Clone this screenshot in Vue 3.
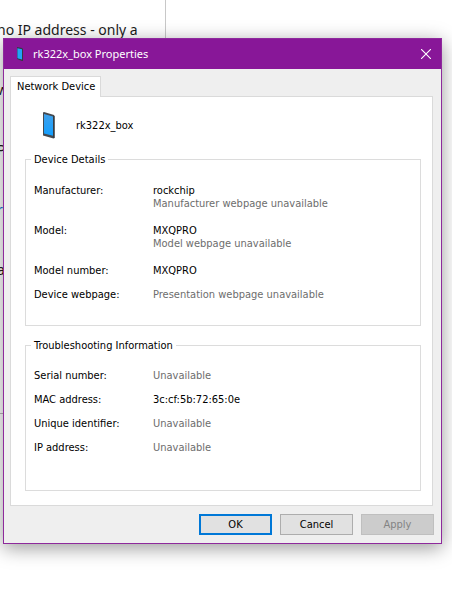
<script setup>
const groups = [
  {
    title: 'Device Details',
    kind: 'details',
    rows: [
      { label: 'Manufacturer:', value: 'rockchip', note: 'Manufacturer webpage unavailable' },
      { label: 'Model:', value: 'MXQPRO', note: 'Model webpage unavailable' },
      { label: 'Model number:', value: 'MXQPRO' },
      { label: 'Device webpage:', note: 'Presentation webpage unavailable' },
    ],
  },
  {
    title: 'Troubleshooting Information',
    kind: 'trouble',
    rows: [
      { label: 'Serial number:', note: 'Unavailable' },
      { label: 'MAC address:', value: '3c:cf:5b:72:65:0e' },
      { label: 'Unique identifier:', note: 'Unavailable' },
      { label: 'IP address:', note: 'Unavailable' },
    ],
  },
]
</script>

<template>
  <div class="desktop">
    <div class="page" aria-hidden="true">
      <p class="line">no IP address - only a</p>
      <p class="line">w</p>
      <p class="line">P</p>
      <p class="line link">r</p>
      <p class="line">a</p>
    </div>

    <section class="dialog" role="dialog" aria-labelledby="dialog-title">
      <header class="titlebar">
        <svg class="icon-small" viewBox="0 0 6 14" aria-hidden="true">
          <path d="M0 0 5 1 6 2V14L5 14 0 12Z" fill="#333b44" />
          <path d="M0.4 1.2 5 2.2V12.4L0.4 11.2Z" fill="#22a3f8" />
        </svg>
        <h1 id="dialog-title">rk322x_box Properties</h1>
        <button class="close" type="button" aria-label="Close">
          <svg viewBox="0 0 10 10" aria-hidden="true">
            <path d="M0 0 10 10M10 0 0 10" stroke="#fff" stroke-width="1.1" />
          </svg>
        </button>
      </header>

      <div class="body">
        <div class="tabs" role="tablist">
          <button id="tab-network" class="tab" type="button" role="tab" aria-selected="true" aria-controls="panel-network">Network Device</button>
        </div>
        <div id="panel-network" class="panel" role="tabpanel" aria-labelledby="tab-network">
          <div class="device">
            <svg class="icon" viewBox="0 0 12 27" aria-hidden="true">
              <defs>
                <linearGradient id="screen" x1="0" y1="0" x2="0" y2="1">
                  <stop offset="0" stop-color="#3fa0ea" />
                  <stop offset="1" stop-color="#129fff" />
                </linearGradient>
              </defs>
              <path d="M0 0.5 1 0 11 3 11.5 4V26L10.5 26.5 0 23.5Z" fill="#454a50" />
              <path d="M10.5 4 11.5 4V26L10.5 26Z" fill="#2c3035" />
              <path d="M1 2 10 4.6V23.8L1 21.4Z" fill="url(#screen)" />
            </svg>
            <span>rk322x_box</span>
          </div>

          <fieldset v-for="g in groups" :key="g.title" class="group" :class="g.kind">
            <legend>{{ g.title }}</legend>
            <dl>
              <div v-for="r in g.rows" :key="r.label" class="row">
                <dt>{{ r.label }}</dt>
                <dd>
                  <span v-if="r.value">{{ r.value }}</span>
                  <span v-if="r.note" class="note">{{ r.note }}</span>
                </dd>
              </div>
            </dl>
          </fieldset>
        </div>

        <footer class="actions">
          <button class="btn primary" type="button">OK</button>
          <button class="btn" type="button">Cancel</button>
          <button class="btn" type="button" disabled>Apply</button>
        </footer>
      </div>
    </section>
  </div>
</template>

<style>
body {
  margin: 0;
  background: #fff;
}
</style>

<style scoped>
.desktop {
  position: relative;
  min-height: 100vh;
  padding: 38px 10px 45px 3px;
  box-sizing: border-box;
  overflow: hidden;
  font-family: 'DejaVu Sans Condensed', 'DejaVu Sans', sans-serif;
  font-size: 11px;
  line-height: 13px;
  color: #000;
}
.page {
  position: absolute;
  top: 0;
  left: 0;
  width: 166px;
  height: 414px;
  padding-top: 20px;
  box-sizing: border-box;
  border-right: 1px solid #c8c8c8;
  border-bottom: 1px solid #b8b8b8;
  font-family: 'Noto Sans', 'Open Sans', sans-serif;
  font-size: 14px;
  line-height: 20px;
  color: #1c1c1c;
}
.line {
  margin: 0 0 40px -3px;
  white-space: nowrap;
}
.link {
  color: #0b78d5;
}
.dialog {
  position: relative;
  border: 1px solid #8e2a9c;
  background: #efefef;
  box-shadow: 0 4px 18px rgba(0, 0, 0, 0.4);
}
.titlebar {
  display: flex;
  align-items: center;
  height: 30px;
  padding: 0 10px 0 13px;
  background: #881798;
  color: #fff;
}
.icon-small {
  width: 6px;
  height: 14px;
  margin-right: 10px;
}
h1 {
  flex: 1;
  margin: 0;
  font-family: 'Noto Sans', 'Open Sans', sans-serif;
  font-size: 11px;
  line-height: 16px;
  font-weight: 400;
}
.close {
  display: flex;
  padding: 0;
  border: 0;
  background: none;
}
.close svg {
  width: 10px;
  height: 10px;
}
.body {
  padding: 7px 7px 8px 6px;
}
.tabs {
  display: flex;
}
.tab {
  position: relative;
  height: 21px;
  margin-bottom: -1px;
  padding: 0 5px 1px 6px;
  border: 1px solid #dadada;
  border-bottom: 0;
  background: #fff;
  color: inherit;
  font: inherit;
}
.panel {
  margin-right: 1px;
  padding: 15px 11px 14px 14px;
  border: 1px solid #dadada;
  background: #fff;
}
.device {
  display: flex;
  align-items: center;
  gap: 21px;
  height: 27px;
  padding-left: 18px;
  margin-bottom: 14px;
}
.icon {
  width: 12px;
  height: 27px;
}
.group {
  min-width: 0;
  margin: 0 0 13px;
  padding: 0 8px;
  border: 1px solid #dcdcdc;
}
.group.trouble {
  margin-bottom: 0;
}
legend {
  margin-left: -3px;
  padding: 0 3px;
}
dl {
  display: grid;
  align-content: start;
  gap: 11px;
  margin: 0;
}
.details dl {
  gap: 14px;
  padding: 18px 0 24px;
}
.details .row:last-child {
  margin-top: -3px;
}
.trouble dl {
  padding: 17px 0 36px;
}
.row {
  display: grid;
  grid-template-columns: 119px 1fr;
}
dt,
dd {
  margin: 0;
}
dd span {
  display: block;
}
.note {
  color: #6d6d6d;
}
.actions {
  display: flex;
  justify-content: flex-end;
  gap: 8px;
  margin-top: 8px;
}
.btn {
  width: 73px;
  height: 21px;
  padding: 0;
  border: 1px solid #adadad;
  background: #e1e1e1;
  color: #000;
  font: inherit;
}
.btn.primary {
  border: 2px solid #0078d7;
}
.btn:disabled {
  border-color: #bfbfbf;
  background: #cccccc;
  color: #838383;
}
</style>
